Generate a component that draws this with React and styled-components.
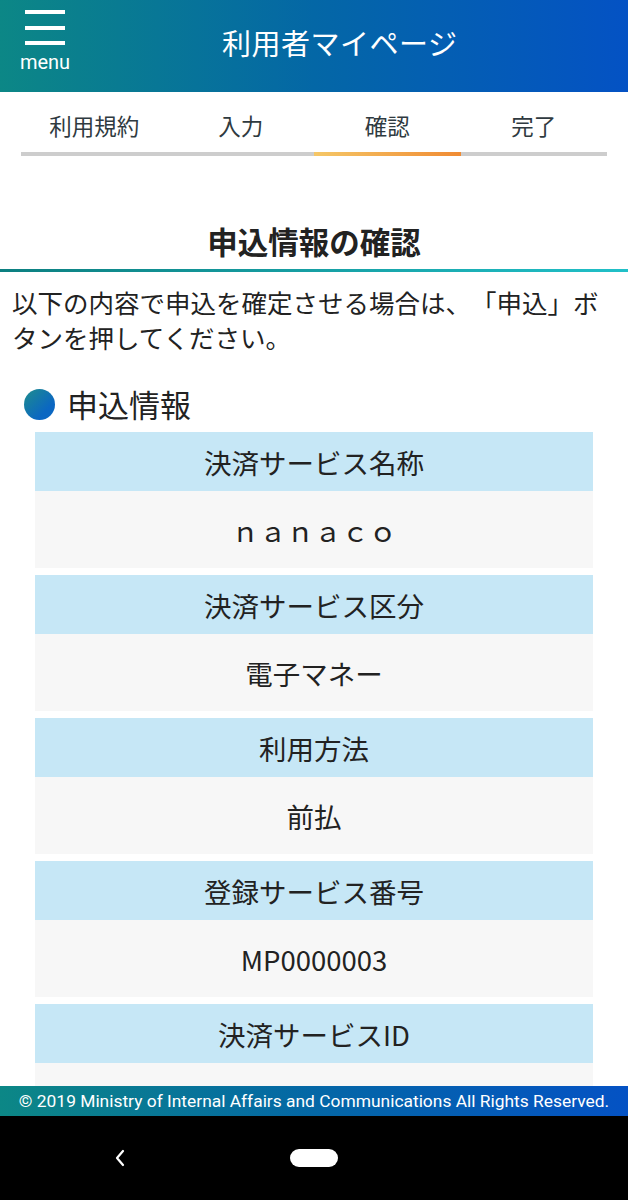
import React from 'react';
import styled, { createGlobalStyle } from 'styled-components';

const GlobalStyle = createGlobalStyle`
  html, body {
    margin: 0;
    padding: 0;
    background: #fff;
  }
  body {
    font-family: Roboto, "Noto Sans CJK JP", sans-serif;
    text-spacing-trim: space-all;
  }
`;

const steps = ['利用規約', '入力', '確認', '完了'];

const rows = [
  { label: '決済サービス名称', value: 'ｎａｎａｃｏ' },
  { label: '決済サービス区分', value: '電子マネー' },
  { label: '利用方法', value: '前払' },
  { label: '登録サービス番号', value: 'MP0000003' },
  { label: '決済サービスID', value: '' },
];

function App() {
  return (
    <Page>
      <GlobalStyle />
      <Header>
        <MenuButton>
          <Burger>
            <span />
            <span />
            <span />
          </Burger>
          <MenuLabel>menu</MenuLabel>
        </MenuButton>
        <Title>利用者マイページ</Title>
      </Header>

      <Steps>
        {steps.map((s) => (
          <Step key={s}>
            <StepLabel>{s}</StepLabel>
            <StepBar active={s === '確認'} />
          </Step>
        ))}
      </Steps>

      <Main>
        <PageHeading>申込情報の確認</PageHeading>
        <Lead>以下の内容で申込を確定させる場合は、「申込」ボタンを押してください。</Lead>

        <SectionTitle>
          <Dot />
          申込情報
        </SectionTitle>

        <Table>
          {rows.map((r) => (
            <Block key={r.label}>
              <Label>{r.label}</Label>
              <Value>{r.value}</Value>
            </Block>
          ))}
        </Table>
      </Main>

      <Footer>© 2019 Ministry of Internal Affairs and Communications All Rights Reserved.</Footer>

      <NavBar>
        <BackIcon viewBox="0 0 16 24">
          <path d="M11 5 L5 12 L11 19" fill="none" stroke="#fff" strokeWidth="2.2" strokeLinecap="round" strokeLinejoin="round" />
        </BackIcon>
        <HomePill />
      </NavBar>
    </Page>
  );
}

export default App;

const Page = styled.div`
  height: 1200px;
  width: 628px;
  display: flex;
  flex-direction: column;
  overflow: hidden;
`;

const Header = styled.header`
  height: 92px;
  flex-shrink: 0;
  display: flex;
  align-items: center;
  background: linear-gradient(90deg, #0c8786 0%, #0467a6 50%, #0452c4 100%);
  color: #fff;
`;

const MenuButton = styled.div`
  width: 90px;
  align-self: flex-start;
  display: flex;
  flex-direction: column;
  align-items: center;
  padding-top: 10px;
`;

const Burger = styled.div`
  width: 40px;
  display: flex;
  flex-direction: column;
  gap: 11.5px;

  span {
    display: block;
    height: 4px;
    background: #fff;
  }
`;

const MenuLabel = styled.div`
  font-family: Roboto, sans-serif;
  font-size: 20px;
  line-height: 24px;
  margin-top: 5px;
`;

const Title = styled.h1`
  margin: 0 0 8px 132px;
  font-family: "Noto Sans CJK JP", sans-serif;
  font-weight: 400;
  font-size: 29px;
  letter-spacing: 0.5px;
`;

const Steps = styled.nav`
  flex-shrink: 0;
  display: grid;
  grid-template-columns: repeat(4, 1fr);
  padding: 0 21px;
  margin-top: 12px;
`;

const Step = styled.div`
  display: flex;
  flex-direction: column;
  align-items: center;
`;

const StepLabel = styled.div`
  font-family: "Noto Sans CJK JP", sans-serif;
  font-size: 22.5px;
  line-height: 42px;
  color: #2f3a40;
`;

const StepBar = styled.div`
  align-self: stretch;
  height: 4px;
  margin-top: 6px;
  background: ${(p) => (p.active ? 'linear-gradient(90deg, #f5c767, #f08b33)' : '#cdcdcd')};
`;

const Main = styled.main`
  flex: 1;
  overflow: hidden;
  padding-top: 63px;
`;

const PageHeading = styled.h2`
  margin: 0;
  text-align: center;
  font-family: "Noto Sans CJK JP", sans-serif;
  font-weight: 700;
  font-size: 30.5px;
  line-height: 44px;
  color: #222;
  padding-bottom: 6px;
  border-bottom: 3px solid transparent;
  border-image: linear-gradient(90deg, #0c7f80, #21c0c8) 1;
`;

const Lead = styled.p`
  margin: 12px 0 0;
  padding: 0 12px;
  font-family: "Noto Sans CJK JP", sans-serif;
  font-size: 25.5px;
  line-height: 35px;
  color: #222;
  text-spacing-trim: space-all;
`;

const SectionTitle = styled.h3`
  margin: 30px 0 0;
  padding-left: 24px;
  display: flex;
  align-items: center;
  gap: 12px;
  font-family: "Noto Sans CJK JP", sans-serif;
  font-weight: 400;
  font-size: 31px;
  line-height: 40px;
  color: #222;
`;

const Dot = styled.span`
  width: 31px;
  height: 31px;
  border-radius: 50%;
  background: linear-gradient(135deg, #1e8d8d 0%, #0b67c2 70%);
`;

const Table = styled.div`
  margin: 8px 35px 0;
  display: flex;
  flex-direction: column;
  gap: 7px;
`;

const Block = styled.div`
  display: flex;
  flex-direction: column;
`;

const Label = styled.div`
  height: 59px;
  display: flex;
  align-items: center;
  justify-content: center;
  background: #c6e7f6;
  font-family: "Noto Sans CJK JP", sans-serif;
  font-size: 27.5px;
  color: #222;
`;

const Value = styled.div`
  height: 77px;
  display: flex;
  align-items: center;
  justify-content: center;
  background: #f7f7f7;
  font-family: "Noto Sans CJK JP", sans-serif;
  font-size: 27.5px;
  color: #222;
`;

const Footer = styled.footer`
  flex-shrink: 0;
  height: 30px;
  display: flex;
  align-items: center;
  justify-content: center;
  background: linear-gradient(90deg, #0c8786 0%, #0467a6 50%, #0452c4 100%);
  color: #fff;
  font-family: Roboto, sans-serif;
  font-size: 17.4px;
  white-space: nowrap;
`;

const NavBar = styled.div`
  flex-shrink: 0;
  height: 84px;
  background: #000;
  display: flex;
  align-items: center;
  padding-left: 112px;
  gap: 162px;
`;

const BackIcon = styled.svg`
  width: 16px;
  height: 24px;
`;

const HomePill = styled.div`
  width: 48px;
  height: 18px;
  border-radius: 9px;
  background: #fff;
`;
